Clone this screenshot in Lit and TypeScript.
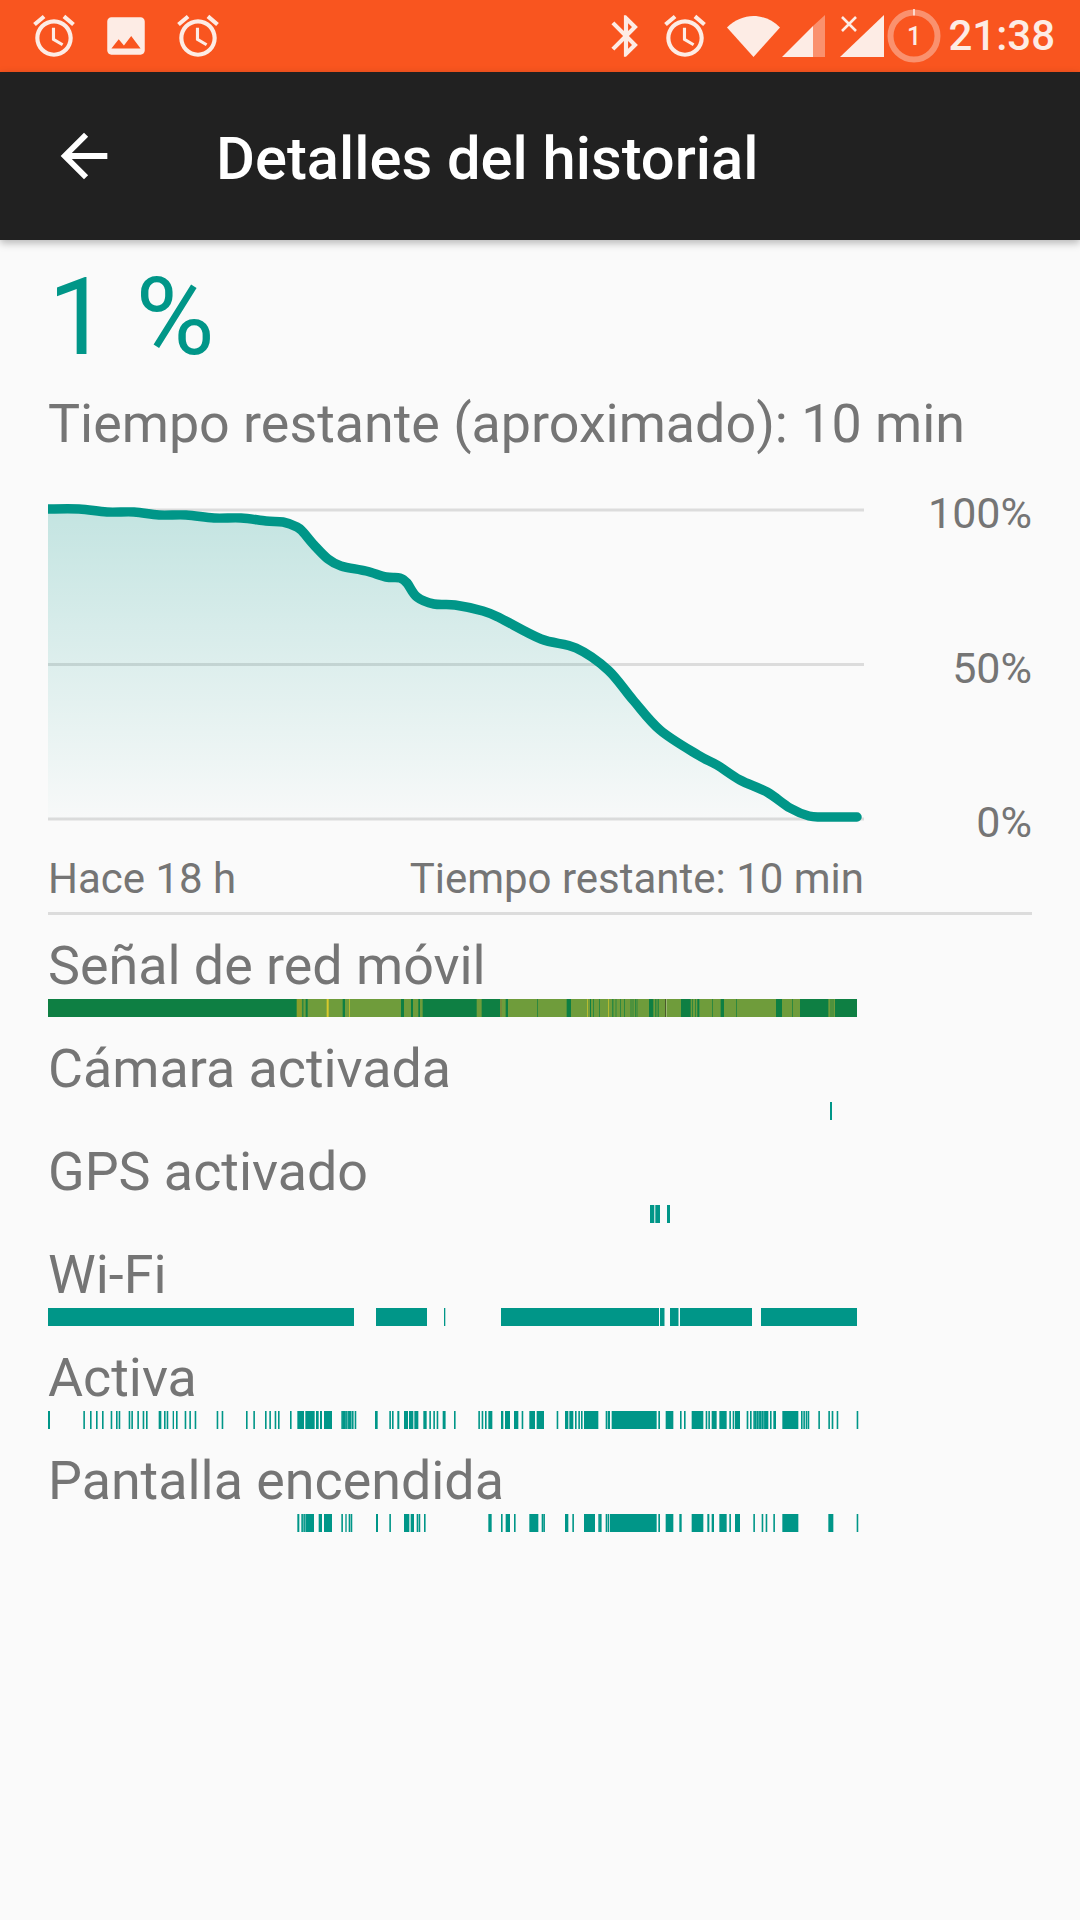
import { LitElement, html, css, svg } from "lit";
import { customElement } from "lit/decorators.js";

const ALARM = "M22 5.72l-4.6-3.86-1.29 1.53 4.6 3.86L22 5.72zM7.88 3.39L6.6 1.86 2 5.71l1.29 1.53 4.59-3.85zM12.5 8H11v6l4.75 2.85.75-1.23-4-2.37V8zM12 4c-4.97 0-9 4.03-9 9s4.03 9 9 9 9-4.03 9-9-4.03-9-9-9zm0 16c-3.87 0-7-3.13-7-7s3.13-7 7-7 7 3.13 7 7-3.13 7-7 7z";
const IMAGE = "M21 19V5c0-1.1-.9-2-2-2H5c-1.1 0-2 .9-2 2v14c0 1.1.9 2 2 2h14c1.1 0 2-.9 2-2zM8.5 13.5l2.5 3.01L14.5 12l4.5 6H5l3.5-4.5z";
const BT = "M17.71 7.71L12 2h-1v7.59L6.41 5 5 6.41 10.59 12 5 17.59 6.41 19 11 14.41V22h1l5.71-5.71-4.3-4.29 4.3-4.29zM13 5.83l1.88 1.88L13 9.59V5.83zm1.88 10.46L13 18.17v-3.76l1.88 1.88z";

const icon = (d: string) => html`<svg class="ic" viewBox="0 0 24 24"><path d=${d} fill-rule="evenodd"></path></svg>`;

/* Battery curve, in page pixels relative to the chart's box (x-48, y-500). */
const CURVE: [number, number][] = [
  [48, 509], [79, 509], [107, 512], [134, 512], [159, 515], [186, 515], [214, 518], [241, 518], [266, 521], [283, 522],
  [297, 527], [303, 532], [314, 545], [328, 559], [341, 566], [366, 571], [386, 577], [400, 578], [407, 583], [417, 597],
  [434, 604], [455, 605], [483, 611], [500, 618], [541, 639], [576, 648], [608, 670], [633, 700], [660, 730], [698, 755],
  [717, 765], [740, 780], [767, 792], [790, 808], [809, 816], [824, 817], [857, 817],
].map(([x, y]) => [x - 48, y - 500] as [number, number]);

function smooth(p: [number, number][]): string {
  let d = `M${p[0][0]} ${p[0][1]}`;
  for (let i = 0; i < p.length - 1; i++) {
    const a = p[Math.max(0, i - 1)], b = p[i], c = p[i + 1], e = p[Math.min(p.length - 1, i + 2)];
    const c1x = b[0] + (c[0] - a[0]) / 6, c1y = b[1] + (c[1] - a[1]) / 6;
    const c2x = c[0] - (e[0] - b[0]) / 6, c2y = c[1] - (e[1] - b[1]) / 6;
    d += `C${c1x.toFixed(1)} ${c1y.toFixed(1)} ${c2x.toFixed(1)} ${c2y.toFixed(1)} ${c[0]} ${c[1]}`;
  }
  return d;
}

type Seg = [number, number];
/* Zoomed coordinates -> page: x/3 + origin */
const z = (origin: number, list: (number | Seg)[]): Seg[] =>
  list.map((s) => (Array.isArray(s) ? [s[0] / 3 + origin, s[1] / 3 + origin] as Seg : [s / 3 + origin, s / 3 + origin + 1.6] as Seg));

const ACTIVE: Seg[] = [
  ...z(40, [[24, 30], 130, 150, 168, 186, 212, 228, 236, 266, 274, 292, 308, 318, [356, 364], 372, 380, [398, 402], 408, 434, 448, 464, 530, 545, 618, 640, 675, 688, 704, 714, 750,
    [772, 792], [796, 824], [828, 836], [840, 846], [852, 876], 904, 908, 912, 916, 922, 926, 930, 936, 944, [1005, 1013], 1048, 1056, [1072, 1078], [1092, 1104], [1107, 1120], [1123, 1135], [1150, 1160], 1168, 1180, 1190, 1208]),
  ...z(440, [12, 42, 115, 125, 135, [145, 157], [183, 190], [195, 210], [222, 235], 245, [268, 285], [290, 312], 350, [375, 385], [388, 400], 405, 415, 423, [432, 475], 497, [503, 510], [515, 650], [655, 660], [677, 700], 720, 732,
    [755, 790], 797, 805, [815, 830], [838, 860], 868, 878, [885, 900], [920, 925], [930, 935], 940, 945, 950, 955, 960, 965, 970, [975, 985], 990, [1000, 1008], [1027, 1075], 1083, 1090, 1097, 1103, 1135, 1165, [1175, 1180], 1190, 1250]),
];

const SCREEN: Seg[] = [
  ...z(40, [[772, 778], 784, 790, [796, 822], [836, 846], [852, 876], 904, [916, 920], 926, 932, [1008, 1014], 1048, [1092, 1108], [1112, 1122], 1130, 1136, 1152]),
  ...z(440, [[145, 155], 183, [197, 210], 222, [268, 295], 305, 310, [375, 385], 397, [432, 465], 475, 480, 497, 503, [510, 650], [655, 660], [677, 700], [718, 725],
    [755, 790], [802, 808], [815, 822], [838, 860], 868, [885, 900], 940, 965, 977, 1000, [1027, 1075], [1165, 1180], 1250]),
];

const WIFI: Seg[] = [[48, 354], [376, 427], [444, 445.3], [501, 659], [660, 664.5], [670, 678.5], [680, 752], [761, 857]];
const CAMERA: Seg[] = [[830, 832]];
const GPS: Seg[] = [[650, 654.3], [655.3, 660], [667, 670]];

/* Mobile signal strip: a dark base with the lighter stretches and stripes over it */
const DARK = "#0e7f43", LIGHT = "#6f9c3b", OLIVE = "#8a9e2a", YEL = "#d8c92c", BROWN = "#8a6a3a";
type CSeg = [number, number, string];
const SIGNAL: CSeg[] = [
  [297, 857, LIGHT],
  ...z(40, [[770, 785]]).map((s) => [...s, OLIVE] as CSeg),
  ...z(40, [[787, 790], [797, 803], [908, 915], [1083, 1092], [1113, 1119], [1135, 1140], [1148, 1200]]).map((s) => [...s, DARK] as CSeg),
  ...z(40, [[860, 866], [928, 930]]).map((s) => [...s, YEL] as CSeg),
  ...z(440, [[0, 110], [125, 180], [197, 204], [292, 294], [380, 393], [450, 453], [460, 462], [478, 480], [517, 520], [527, 529], [540, 542], [553, 555], [572, 574], [578, 580], [585, 587], [590, 592], [627, 640], [645, 647], [650, 652], [655, 657], [723, 752], [757, 759], [765, 767], [772, 778], [817, 819], [842, 852], [888, 890], [1008, 1026], [1057, 1059], [1080, 1165], [1172, 1174], [1178, 1180], [1185, 1251]]).map((s) => [...s, DARK] as CSeg),
  ...z(440, [[441, 443], [505, 507]]).map((s) => [...s, YEL] as CSeg),
  ...z(440, [[182, 184]]).map((s) => [...s, BROWN] as CSeg),
  ...z(440, [[675, 678]]).map((s) => [...s, "#4a5a2a"] as CSeg),
  ...z(440, [[678, 679]]).map((s) => [...s, "#f4f4e8"] as CSeg),
];

const strip = (segs: CSeg[]) => svg`
  <svg class="strip" viewBox="48 0 816 18">
    ${segs.map(([a, b, c]) => svg`<rect x=${a} y="0" width=${b - a} height="18" fill=${c}></rect>`)}
  </svg>`;

const teal = (s: Seg[]): CSeg[] => s.map(([a, b]) => [a, b, "#009688"] as CSeg);

const ROWS: { label: string; segs: CSeg[] }[] = [
  { label: "Señal de red móvil", segs: [[48, 297, DARK], ...SIGNAL] },
  { label: "Cámara activada", segs: teal(CAMERA) },
  { label: "GPS activado", segs: teal(GPS) },
  { label: "Wi-Fi", segs: teal(WIFI) },
  { label: "Activa", segs: teal(ACTIVE) },
  { label: "Pantalla encendida", segs: teal(SCREEN) },
];

@customElement("app-root")
export class AppRoot extends LitElement {
  static styles = css`
    :host { display: block; width: 1080px; height: 1920px; background: #fafafa; font-family: Roboto, "Liberation Sans", sans-serif; overflow: hidden; }
    .status { height: 72px; background: #f9551f; display: flex; align-items: center; fill: #fdece5; color: #fdece5; }
    .ic { width: 50px; height: 50px; flex: none; display: block; }
    .left { display: flex; gap: 22px; padding-left: 29px; }
    .right { margin-left: auto; display: flex; align-items: center; padding-right: 25px; }
    .alarm { margin-left: 8.5px; }
    .wifi { width: 53px; height: 42px; margin-left: 17.5px; margin-top: -1px; display: block; }
    .sig { width: 43px; height: 42px; margin-left: 2px; margin-top: -1px; display: block; }
    .sigx { width: 44px; height: 42px; margin-left: 15px; margin-top: -1px; display: block; overflow: visible; }
    .batt { width: 54px; height: 54px; margin-left: 3px; display: block; }
    .time { margin-left: 7px; font-size: 42px; font-weight: 500; line-height: 72px; }

    .bar { height: 168px; background: #212121; display: flex; align-items: center; padding-left: 49px; box-shadow: 0 3px 8px rgba(0, 0, 0, 0.28); position: relative; }
    .back { width: 70px; height: 70px; fill: #fff; display: block; }
    .title { margin: 5px 0 0 97px; color: #fff; font-size: 59.7px; font-weight: 500; line-height: 70px; }

    .content { padding: 0 48px; color: #757575; }
    .pct { color: #009688; font-size: 108px; line-height: 126px; margin-top: 14px; }
    .remain { font-size: 53.8px; line-height: 64px; margin-top: 12px; }
    .chart { display: flex; margin-top: 44px; height: 336px; }
    .plot { width: 816px; height: 336px; display: block; flex: none; }
    .axis { flex: 1; display: flex; flex-direction: column; align-items: flex-end; font-size: 43px; line-height: 50px; margin-top: -12px; }
    .axis span { display: block; height: 154.5px; line-height: 50px; flex: none; }
    .foot { width: 816px; display: flex; justify-content: space-between; font-size: 42px; line-height: 50px; margin-top: 18px; }
    .rule { height: 3px; background: #dcdcdc; margin-top: 8px; }
    .rows { margin-top: -1px; }
    .row { height: 103px; display: flex; flex-direction: column; }
    .label { height: 85px; font-size: 53.8px; line-height: 64px; padding-top: 20px; box-sizing: border-box; }
    .strip { display: block; width: 816px; height: 18px; }
  `;

  render() {
    const area = smooth(CURVE) + `L809 320L0 320Z`;
    return html`
      <div class="status">
        <div class="left">${icon(ALARM)}${icon(IMAGE)}${icon(ALARM)}</div>
        <div class="right">
          ${icon(BT)}
          <span class="alarm">${icon(ALARM)}</span>
          <svg class="wifi" viewBox="0 0 53 42"><path d="M0 12.5C7.5 5 17 1 26.5 1S45.500 5 53 12.500L26.500 42z"></path></svg>
          <svg class="sig" viewBox="0 0 43 42"><path d="M0 42L31 11V42z"></path><path d="M31 11L43 0V42H31z" opacity=".4"></path></svg>
          <svg class="sigx" viewBox="0 0 44 42"><path d="M0 42L44 0V42z"></path><path d="M2 5l14 14M16 5L2 19" stroke="#fdece5" stroke-width="2.600" fill="none" transform="translate(0 -3)"></path></svg>
          <svg class="batt" viewBox="0 0 54 54">
            <circle cx="27" cy="27" r="23.500" fill="none" stroke="#fdece5" stroke-opacity=".4" stroke-width="6"></circle>
            <rect x="26.200" y="0" width="1.600" height="6.500"></rect>
            <text x="27" y="36" font-size="25" font-weight="500" text-anchor="middle" font-family="Roboto">1</text>
          </svg>
          <span class="time">21:38</span>
        </div>
      </div>
      <div class="bar">
        <svg class="back" viewBox="0 0 24 24"><path d="M20 11H7.830l5.590-5.590L12 4l-8 8 8 8 1.410-1.410L7.830 13H20v-2z"></path></svg>
        <div class="title">Detalles del historial</div>
      </div>
      <div class="content">
        <div class="pct">1 %</div>
        <div class="remain">Tiempo restante (aproximado): 10 min</div>
        <div class="chart">
          <svg class="plot" viewBox="0 0 816 336">
            <defs>
              <linearGradient id="g" x1="0" y1="0" x2="0" y2="1">
                <stop offset="0" stop-color="#009688" stop-opacity=".22"></stop>
                <stop offset="1" stop-color="#009688" stop-opacity=".01"></stop>
              </linearGradient>
            </defs>
            <rect x="0" y="8.500" width="816" height="3" fill="#dcdcdc"></rect>
            <rect x="0" y="163" width="816" height="3" fill="#dcdcdc"></rect>
            <rect x="0" y="317.500" width="816" height="3" fill="#dcdcdc"></rect>
            <path d=${area} fill="url(#g)"></path>
            <path d=${smooth(CURVE)} fill="none" stroke="#009688" stroke-width="9.500" stroke-linecap="round" stroke-linejoin="round"></path>
          </svg>
          <div class="axis">
            <span>100%</span><span>50%</span><span>0%</span>
          </div>
        </div>
        <div class="foot"><span>Hace 18 h</span><span>Tiempo restante: 10 min</span></div>
        <div class="rule"></div>
        <div class="rows">
          ${ROWS.map((r) => html`<div class="row"><div class="label">${r.label}</div>${strip(r.segs)}</div>`)}
        </div>
      </div>
    `;
  }
}
